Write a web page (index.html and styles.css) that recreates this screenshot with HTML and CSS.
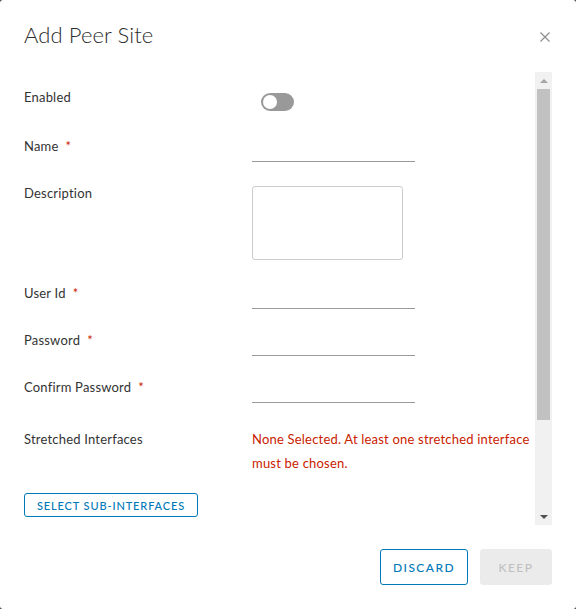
FILE: index.html
```html
<!DOCTYPE html>
<html>
<head>
<meta charset="utf-8">
<link rel="stylesheet" href="styles.css">
</head>
<body>
<div class="modal">
  <div class="modal-header">
    <h3 class="modal-title">Add Peer Site</h3>
    <button class="close" aria-label="Close">
      <svg width="10" height="10" viewBox="0 0 10 10"><path d="M0.5 0.5 L9.5 9.5 M9.5 0.5 L0.5 9.5" stroke="#8c8c8c" stroke-width="1.1" fill="none"/></svg>
    </button>
  </div>
  <div class="modal-body">
    <div class="content">
      <div class="row row-enabled">
        <div class="label">Enabled</div>
        <div class="field"><span class="toggle"><span class="knob"></span></span></div>
      </div>
      <div class="row row-input">
        <div class="label">Name<span class="req">*</span></div>
        <div class="field"><div class="input"></div></div>
      </div>
      <div class="row row-desc">
        <div class="label">Description</div>
        <div class="field"><div class="textarea"></div></div>
      </div>
      <div class="row row-input">
        <div class="label">User Id<span class="req">*</span></div>
        <div class="field"><div class="input"></div></div>
      </div>
      <div class="row row-input">
        <div class="label">Password<span class="req">*</span></div>
        <div class="field"><div class="input"></div></div>
      </div>
      <div class="row row-confirm">
        <div class="label">Confirm Password<span class="req">*</span></div>
        <div class="field"><div class="input"></div></div>
      </div>
      <div class="row row-stretched">
        <div class="label">Stretched Interfaces</div>
        <div class="field error">None Selected. At least one stretched interface must be chosen.</div>
      </div>
      <button class="btn-sm">SELECT SUB-INTERFACES</button>
    </div>
    <div class="scrollbar">
      <div class="arrow up"></div>
      <div class="track"><div class="thumb"></div></div>
      <div class="arrow down"></div>
    </div>
  </div>
  <div class="modal-footer">
    <button class="btn btn-outline">DISCARD</button>
    <button class="btn btn-disabled">KEEP</button>
  </div>
</div>
</body>
</html>
```
FILE: styles.css
```css
html { background: #3a3a3a; }
body { margin: 0; font-family: Lato, "Liberation Sans", sans-serif; }
.modal {
  width: 576px; height: 609px; background: #fff; border-radius: 3px;
  display: flex; flex-direction: column; box-sizing: border-box;
}
.modal-header {
  height: 72px; box-sizing: border-box; padding: 21px 24px 0 24px;
  display: flex; justify-content: space-between; align-items: flex-start;
}
.modal-title {
  margin: 0; font-size: 22px; line-height: 28px; font-weight: 300; color: #2d2d2d;
  letter-spacing: 0.1px;
}
.close {
  width: 14px; height: 14px; padding: 0; margin-top: 9px; border: 0; background: none;
  display: flex; align-items: center; justify-content: center;
}
.modal-body { height: 453px; display: flex; padding: 0 24px; }
.content {
  flex: 1; overflow: hidden; padding-top: 13px; box-sizing: border-box;
}
.row { display: flex; }
.label {
  width: 228px; flex: none; font-size: 13px; line-height: 24px; color: #333;
  letter-spacing: 0.2px;
}
.req { color: #c92100; margin-left: 7px; }
.field { flex: 1; min-width: 0; }
.row-enabled { height: 49px; }
.row-input { height: 47px; }
.row-desc { height: 100px; }
.row-confirm { height: 52px; }
.toggle {
  display: block; width: 33px; height: 18px; border-radius: 9px; background: #999;
  margin: 8px 0 0 9px; position: relative;
}
.knob {
  position: absolute; left: 2px; top: 2px; width: 14px; height: 14px; border-radius: 50%; background: #fff;
}
.input { width: 163px; height: 24px; margin-top: 3px; border-bottom: 1px solid #9a9a9a; }
.textarea {
  width: 151px; height: 74px; margin-top: 5px; box-sizing: border-box;
  border: 1px solid #ccc; border-radius: 3px;
}
.error { font-size: 13px; line-height: 24px; color: #c92100; letter-spacing: 0.2px; }
.btn-sm {
  margin-top: 18px; height: 24px; width: 174px; padding: 0; box-sizing: border-box;
  border: 1px solid #0079b8; border-radius: 3px; background: #fff; color: #0079b8;
  font-family: Lato, "Liberation Sans", sans-serif; font-size: 11px; letter-spacing: 0.08em;
  font-weight: 500;
}
.scrollbar { width: 17px; background: #f1f1f1; display: flex; flex-direction: column; align-items: center; }
.arrow { height: 17px; width: 17px; display: flex; align-items: center; justify-content: center; }
.arrow.up::before {
  content: ""; border-left: 4px solid transparent; border-right: 4px solid transparent;
  border-bottom: 4px solid #a3a3a3;
}
.arrow.down::before {
  content: ""; border-left: 4px solid transparent; border-right: 4px solid transparent;
  border-top: 4px solid #505050;
}
.track { flex: 1; width: 13px; }
.thumb { height: 331px; background: #c1c1c1; }
.modal-footer {
  flex: 1; display: flex; justify-content: flex-end; align-items: flex-start;
  padding: 24px 24px 0 24px; gap: 12px;
}
.btn {
  height: 36px; box-sizing: border-box; border-radius: 3px; padding: 0;
  font-family: Lato, "Liberation Sans", sans-serif; font-size: 12px; letter-spacing: 0.12em; font-weight: 500;
}
.btn-outline { width: 88px; background: #fff; border: 1px solid #0079b8; color: #0079b8; }
.btn-disabled { width: 72px; background: #ebebeb; border: 1px solid #ebebeb; color: #c0c0c0; }
```
